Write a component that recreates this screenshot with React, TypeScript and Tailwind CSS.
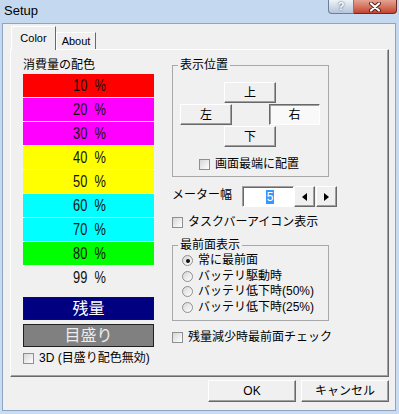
import React from "react";

const bars = [
  { n: "10", bg: "bg-[#ff0000]" },
  { n: "20", bg: "bg-[#ff00ff]" },
  { n: "30", bg: "bg-[#ff00ff]" },
  { n: "40", bg: "bg-[#ffff00]" },
  { n: "50", bg: "bg-[#ffff00]" },
  { n: "60", bg: "bg-[#00ffff]" },
  { n: "70", bg: "bg-[#00ffff]" },
  { n: "80", bg: "bg-[#00ff00]" },
  { n: "99", bg: "" },
];

const radios = ["常に最前面", "バッテリ駆動時", "バッテリ低下時(50%)", "バッテリ低下時(25%)"];

const raised =
  "border border-t-white border-l-white border-r-[#696969] border-b-[#696969] shadow-[inset_-1px_-1px_0_#a0a0a0]";
const pressed =
  "border border-t-[#696969] border-l-[#696969] border-r-white border-b-white shadow-[inset_1px_1px_0_#a0a0a0] bg-[#f9f9f9]";

function Btn({ children, className = "", down = false }: { children: React.ReactNode; className?: string; down?: boolean }) {
  return (
    <div
      className={`flex items-center justify-center text-[12px] leading-none ${down ? pressed : raised + " bg-[#f0f0f0]"} ${className}`}
    >
      {children}
    </div>
  );
}

function Check({ label, className = "" }: { label: string; className?: string }) {
  return (
    <div className={`flex h-[16px] items-center gap-[5px] ${className}`}>
      <span className="h-[11px] w-[11px] shrink-0 border border-[#8e8f8f] bg-linear-to-br from-[#d6d6d6] to-white" />
      <span className="whitespace-nowrap text-[12px] leading-[16px]">{label}</span>
    </div>
  );
}

export default function App() {
  return (
    <div className="flex h-[414px] w-[399px] select-none flex-col bg-linear-to-b from-[#c4d9ef] to-[#c9dcf1] font-['Liberation_Sans','Noto_Sans_CJK_JP',sans-serif] text-black">
      {/* title bar */}
      <div className="flex h-[23px] shrink-0 items-start justify-between pl-[4px] pr-[2px]">
        <span className="pt-[3px] text-[13px] leading-[15px]">Setup</span>
        <div className="flex">
          <div className="flex h-[14px] w-[26px] items-center justify-center rounded-bl-[4px] border border-t-0 border-[#6e7f95] bg-linear-to-b from-[#eef3f9] to-[#b5c5d9] text-[11px] font-bold leading-none text-white [text-shadow:0_0_2px_#334]">
            ?
          </div>
          <div className="flex h-[14px] w-[43px] items-center justify-center rounded-br-[4px] border border-l-0 border-t-0 border-[#6b2a22] bg-linear-to-b from-[#e4a392] to-[#c3432f]">
            <svg width="14" height="10" viewBox="0 0 14 10">
              <path d="M3 1.5L11 8.5M11 1.5L3 8.5" stroke="#5a1b12" strokeWidth="4" strokeLinecap="round" />
              <path d="M3 1.5L11 8.5M11 1.5L3 8.5" stroke="#fff" strokeWidth="2.2" strokeLinecap="round" />
            </svg>
          </div>
        </div>
      </div>

      {/* client */}
      <div className="mb-[3px] ml-[2px] mr-[3px] flex flex-1 flex-col border border-[#8ea5c1] bg-[#f0f0f0] pl-[7px] pr-[6px] pt-[2px]">
        {/* tabs */}
        <div className="flex h-[23px] items-end pl-[1px]">
          <div className="relative z-10 -mb-px flex h-[24px] w-[45px] items-start justify-center border border-b-0 border-l-white border-r-[#696969] border-t-white bg-[#f0f0f0] pt-[5px] text-[11px] leading-[13px]">
            Color
          </div>
          <div className="flex h-[17px] w-[40px] items-center justify-center border border-b-0 border-l-white border-r-[#696969] border-t-white text-[11px] leading-none">
            About
          </div>
        </div>

        {/* panel */}
        <div className={`flex h-[328px] w-[379px] gap-[18px] pl-[12px] pt-[7px] ${raised}`}>
          {/* left column */}
          <div className="flex w-[131px] flex-col">
            <div className="h-[16px] text-[12px] leading-[16px]">消費量の配色</div>
            <div className="mt-[1px] flex flex-col gap-[1px]">
              {bars.map((b) => (
                <div key={b.n} className={`flex h-[23px] items-center justify-center pl-[3px] ${b.bg}`}>
                  <span className="flex scale-x-[0.8] items-center gap-[9px] font-['Liberation_Sans'] text-[16px] leading-none text-[#111]">
                    <span>{b.n}</span>
                    <span>%</span>
                  </span>
                </div>
              ))}
            </div>
            <div className="mt-[8px] flex h-[23px] items-center justify-center border border-[#101030] bg-[#000080] text-[16px] leading-none text-white">
              残量
            </div>
            <div className="mt-[4px] flex h-[23px] items-center justify-center border border-[#202020] bg-[#808080] text-[16px] leading-none text-[#ececec]">
              目盛り
            </div>
            <Check label="3D (目盛り配色無効)" className="mt-[3px]" />
          </div>

          {/* right column */}
          <div className="flex w-[166px] flex-col">
            <fieldset className="w-[157px] border border-[#a8a8a8] pb-[4px] pt-[9px]">
              <legend className="ml-[5px] px-[2px] text-[12px] leading-[16px]">表示位置</legend>
              <Btn className="ml-[51px] h-[21px] w-[52px]">上</Btn>
              <div className="mt-[1px] flex">
                <Btn className="ml-[7px] h-[21px] w-[52px]">左</Btn>
                <Btn down className="ml-[37px] h-[21px] w-[51px]">右</Btn>
              </div>
              <Btn className="ml-[51px] mt-[1px] h-[21px] w-[52px]">下</Btn>
              <Check label="画面最端に配置" className="ml-[26px] mt-[9px]" />
            </fieldset>

            <div className="mt-[9px] flex h-[21px] items-center">
              <span className="mb-[3px] w-[70px] text-[12px] leading-[16px]">メーター幅</span>
              <div className="flex h-[21px] w-[52px] items-center justify-center border border-b-white border-l-[#a0a0a0] border-r-white border-t-[#a0a0a0] bg-white shadow-[inset_1px_1px_0_#696969]">
                <span className="ml-[4px] bg-[#3399ff] px-[1px] text-[12px] leading-[14px] text-white">5</span>
              </div>
              <Btn className="h-[21px] w-[21px]">
                <svg width="5" height="8" viewBox="0 0 5 8">
                  <path d="M5 0L0 4L5 8Z" fill="#000" />
                </svg>
              </Btn>
              <Btn className="ml-[1px] h-[21px] w-[21px]">
                <svg width="5" height="8" viewBox="0 0 5 8">
                  <path d="M0 0L5 4L0 8Z" fill="#000" />
                </svg>
              </Btn>
            </div>

            <Check label="タスクバーアイコン表示" className="mt-[7px]" />

            <fieldset className="mt-[7px] w-[157px] border border-[#a8a8a8] pb-[5px]">
              <legend className="ml-[5px] px-[2px] text-[12px] leading-[16px]">最前面表示</legend>
              {radios.map((r, i) => (
                <div key={r} className="ml-[9px] flex h-[15.5px] items-center gap-[5px]">
                  <span className="flex h-[11px] w-[11px] shrink-0 items-center justify-center rounded-full border border-[#8e8f8f] bg-linear-to-br from-[#d6d6d6] to-white">
                    {i === 0 && <span className="h-[4px] w-[4px] rounded-full bg-[#111]" />}
                  </span>
                  <span className="whitespace-nowrap text-[12px] leading-[15px]">{r}</span>
                </div>
              ))}
            </fieldset>

            <Check label="残量減少時最前面チェック" className="mt-[8px]" />
          </div>
        </div>

        {/* buttons */}
        <div className="mt-[3px] flex justify-end gap-[5px]">
          <Btn className="h-[22px] w-[88px]">OK</Btn>
          <Btn className="h-[22px] w-[88px]">キャンセル</Btn>
        </div>
      </div>
    </div>
  );
}
